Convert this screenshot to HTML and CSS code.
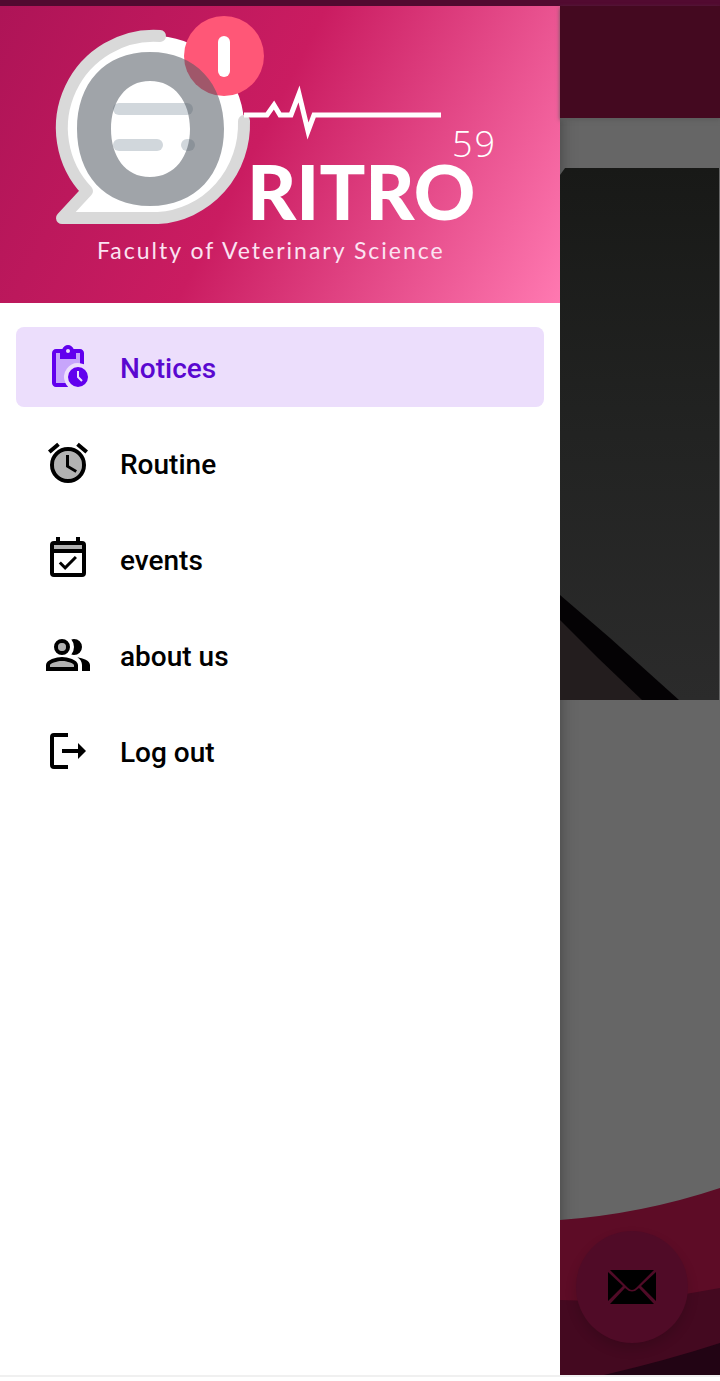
FILE: index.html
```html
<!DOCTYPE html>
<html lang="en">
<head>
<meta charset="utf-8">
<meta name="viewport" content="width=device-width, initial-scale=1">
<title>Oritro 59</title>
<link rel="stylesheet" href="styles.css">
</head>
<body>
<div class="status-bar"></div>
<div class="screen">
  <aside class="drawer">
    <header class="drawer-header">
      <svg class="logo" viewBox="0 6 560 297" role="img" aria-label="Oritro 59, Faculty of Veterinary Science">
        <path fill="#fff" d="M160 36A92 92 0 0 0 87 191L62 218H158A91 94 0 0 0 244 121A91 91 0 0 0 160 36Z"/>
        <path class="bubble-line" d="M160 36A92 92 0 0 0 87 191L62 218H158A91 94 0 0 0 244 121"/>
        <circle cx="224" cy="56" r="40" fill="#ff5777"/>
        <g fill="#d1d7dc">
          <rect x="113" y="103" width="80" height="12" rx="6"/>
          <rect x="113" y="139" width="50" height="12" rx="6"/>
          <rect x="181" y="139" width="14" height="12" rx="6"/>
        </g>
        <path class="ring" d="M150 52C196 52 224 84 224 129S196 206 150 206S77 174 77 129S104 52 150 52ZM150 81C125 81 111 102 111 129S125 177 150 177S190 156 190 129S175 81 150 81Z"/>
        <rect x="218" y="36" width="12" height="41" rx="6" fill="#fff"/>
        <polyline class="pulse" points="244,115 267,115 274,105 280,115 291,115 299,94 308,131 314,115 441,115"/>
        <text class="logo-number" x="452" y="157">59</text>
        <text class="logo-name" x="247" y="220">RITRO</text>
        <text class="logo-tagline" x="97" y="259">Faculty of Veterinary Science</text>
      </svg>
    </header>
    <nav class="menu">
      <a class="menu-item menu-item-active" href="#notices">
        <svg class="menu-icon" viewBox="0 0 24 24" aria-hidden="true">
          <path fill="#c7a5fb" d="M16 5v3H8V5H6v15h4.7a7 7 0 0 1 7.3-9.9V5z"/>
          <path fill-rule="evenodd" d="M17 12a5 5 0 1 0 0 10a5 5 0 0 0 0-10zM18.650 19.350L16.500 17.200V14h1v2.790l1.850 1.850z"/>
          <path fill-rule="evenodd" d="M18 3h-3.180C14.400 1.840 13.300 1 12 1s-2.400.84-2.820 2H6c-1.100 0-2 .9-2 2v15c0 1.100.9 2 2 2h6.110a6.700 6.700 0 0 1-1.420-2H6V5h2v3h8V5h2v5.080c.71.100 1.380.310 2 .600V5c0-1.100-.9-2-2-2zM12 5a1 1 0 1 1 0-2a1 1 0 0 1 0 2z"/>
        </svg>
        <span class="menu-label">Notices</span>
      </a>
      <a class="menu-item" href="#routine">
        <svg class="menu-icon" viewBox="0 0 24 24" aria-hidden="true">
          <circle cx="12" cy="13" r="7" opacity=".3"/>
          <path d="M22 5.720l-4.600-3.860-1.290 1.530 4.600 3.860zM7.880 3.390L6.600 1.860 2 5.710l1.290 1.530zM12.500 8H11v6l4.750 2.850.75-1.230-4-2.370z"/>
          <path fill-rule="evenodd" d="M12 4a9 9 0 1 0 0 18a9 9 0 0 0 0-18zM12 20a7 7 0 1 1 0-14a7 7 0 0 1 0 14z"/>
        </svg>
        <span class="menu-label">Routine</span>
      </a>
      <a class="menu-item" href="#events">
        <svg class="menu-icon" viewBox="0 0 24 24" aria-hidden="true">
          <path opacity=".3" d="M5 5h14v2H5z"/>
          <path fill-rule="evenodd" d="M19 3h-1V1h-2v2H8V1H6v2H5a2 2 0 0 0-2 2v14a2 2 0 0 0 2 2h14a2 2 0 0 0 2-2V5a2 2 0 0 0-2-2zM19 19H5V9h14zM19 7H5V5h14z"/>
          <path d="M10.560 17.460l5.930-5.930-1.060-1.060-4.870 4.870-2.110-2.110-1.060 1.060z"/>
        </svg>
        <span class="menu-label">events</span>
      </a>
      <a class="menu-item" href="#about">
        <svg class="menu-icon" viewBox="0 0 24 24" aria-hidden="true">
          <path opacity=".3" d="M9 6a2 2 0 1 0 0 4a2 2 0 0 0 0-4zM3 18v-1c.2-.7 3.300-2 6-2s5.800 1.300 6 2v1z"/>
          <path d="M16.670 13.130C18.040 14.060 19 15.320 19 17v3h4v-3c0-2.180-3.570-3.470-6.330-3.870zM15 12a4 4 0 0 0 0-8c-.47 0-.91.1-1.330.24a6 6 0 0 1 0 7.520c.42.14.86.24 1.330.24z"/>
          <path fill-rule="evenodd" d="M9 12a4 4 0 1 0 0-8a4 4 0 0 0 0 8zM9 10a2 2 0 1 1 0-4a2 2 0 0 1 0 4zM9 13c-2.670 0-8 1.340-8 4v3h16v-3c0-2.660-5.330-4-8-4zM15 18H3v-1c.2-.7 3.300-2 6-2s5.800 1.300 6 2z"/>
        </svg>
        <span class="menu-label">about us</span>
      </a>
      <a class="menu-item" href="#logout">
        <svg class="menu-icon" viewBox="0 0 24 24" aria-hidden="true">
          <path d="M12 3H5a2 2 0 0 0-2 2v14a2 2 0 0 0 2 2h7v-2H5V5h7z"/>
          <path d="M9 11h8V8l4 4-4 4v-3H9z"/>
        </svg>
        <span class="menu-label">Log out</span>
      </a>
    </nav>
  </aside>
  <main class="page">
    <div class="app-bar"></div>
    <svg class="photo" viewBox="0 0 160 532" preserveAspectRatio="none" aria-hidden="true">
      <defs>
        <linearGradient id="board" x1="0" y1="0" x2="0" y2="1">
          <stop offset="0" stop-color="#181917"/>
          <stop offset=".5" stop-color="#222322"/>
          <stop offset="1" stop-color="#2b2b2b"/>
        </linearGradient>
      </defs>
      <path fill="url(#board)" d="M5 0H159V532H0V7Z"/>
      <path fill="#231d1e" d="M0 450L88 532H0Z"/>
      <path fill="#040204" d="M0 427L50 470L119 532H82L38 490L0 452Z"/>
    </svg>
    <div class="footer-art">
      <svg class="waves" viewBox="0 0 160 187" preserveAspectRatio="none" aria-hidden="true">
        <path fill="#5d0c26" d="M0 32Q82 26 160 0V187H0Z"/>
        <path fill="#440920" d="M0 112Q80 116 160 100V187H0Z"/>
        <path fill="#220414" d="M44 187Q108 172 160 155V187Z"/>
      </svg>
      <button class="compose" type="button" aria-label="Send mail">
        <svg class="mail-icon" viewBox="0 0 48 34" aria-hidden="true">
          <path d="M2 0H46L28 18Q24 22 20 18ZM0 2L15 16L0 31ZM48 2V31L33 16ZM2 34L17 18Q24 25 31 18L46 34Z"/>
        </svg>
      </button>
    </div>
  </main>
</div>
<div class="gesture-bar"></div>
</body>
</html>
```
FILE: styles.css
```css
* {
  box-sizing: border-box;
}

body {
  display: flex;
  flex-direction: column;
  min-height: 100vh;
  margin: 0;
  background: #fff;
  font-family: Roboto, "Liberation Sans", sans-serif;
}

.status-bar {
  height: 6px;
  background: #520a30;
}

.screen {
  display: grid;
  flex: 1;
  grid-template-columns: 7fr 2fr;
}

.drawer {
  background: #fff;
}

.drawer-header {
  background: linear-gradient(117deg, #ae1457 0%, #ca1c61 46%, #ff79b1 100%);
}

.logo {
  display: block;
  width: 100%;
}

.logo text {
  fill: #fff;
  font-family: Lato, sans-serif;
}

.logo .logo-number {
  font-family: "Open Sans", sans-serif;
  font-size: 36px;
  font-weight: 300;
  letter-spacing: 2px;
}

.logo .logo-name {
  font-size: 76px;
  font-weight: 900;
}

.logo .logo-tagline {
  fill: #fbe3f2;
  font-size: 23px;
  letter-spacing: 2px;
}

.ring {
  fill: #505761;
  fill-rule: evenodd;
  opacity: 0.54;
}

.bubble-line {
  fill: none;
  stroke: #d9d9d9;
  stroke-linecap: round;
  stroke-linejoin: round;
  stroke-width: 12px;
}

.pulse {
  fill: none;
  stroke: #fff;
  stroke-miterlimit: 10;
  stroke-width: 5px;
}

.menu {
  display: flex;
  flex-direction: column;
  gap: 16px;
  padding: 24px 16px;
}

.menu-item {
  display: flex;
  align-items: center;
  gap: 28px;
  height: 80px;
  padding: 0 28px;
  border-radius: 8px;
  color: #000;
  font-size: 28px;
  font-weight: 500;
  line-height: 32px;
  text-decoration: none;
}

.menu-label {
  padding-top: 4px;
}

.menu-item-active {
  background: #ecdefc;
  color: #5a08d0;
}

.menu-icon {
  width: 48px;
  height: 48px;
  fill: currentColor;
}

.menu-item-active .menu-icon {
  fill: #6200ee;
}

.page {
  display: flex;
  flex-direction: column;
  background: #666;
  box-shadow: inset 16px 0 16px -16px #444;
}

.app-bar {
  height: 112px;
  margin-bottom: 50px;
  background: #440920;
  box-shadow: 0 2px 4px #5c5c5c;
}

.photo {
  width: 100%;
  height: 532px;
}

.footer-art {
  position: relative;
  margin-top: auto;
}

.waves {
  display: block;
  width: 100%;
  height: 187px;
}

.compose {
  position: absolute;
  right: 32px;
  bottom: 32px;
  display: flex;
  align-items: center;
  justify-content: center;
  width: 112px;
  height: 112px;
  padding: 0;
  border: 0;
  border-radius: 50%;
  background: #500b27;
  box-shadow: 0 6px 12px rgba(0, 0, 0, 0.15);
}

.mail-icon {
  width: 48px;
  height: 34px;
}

.gesture-bar {
  height: 6px;
  border-top: 2px solid #f0f0f0;
}
```
